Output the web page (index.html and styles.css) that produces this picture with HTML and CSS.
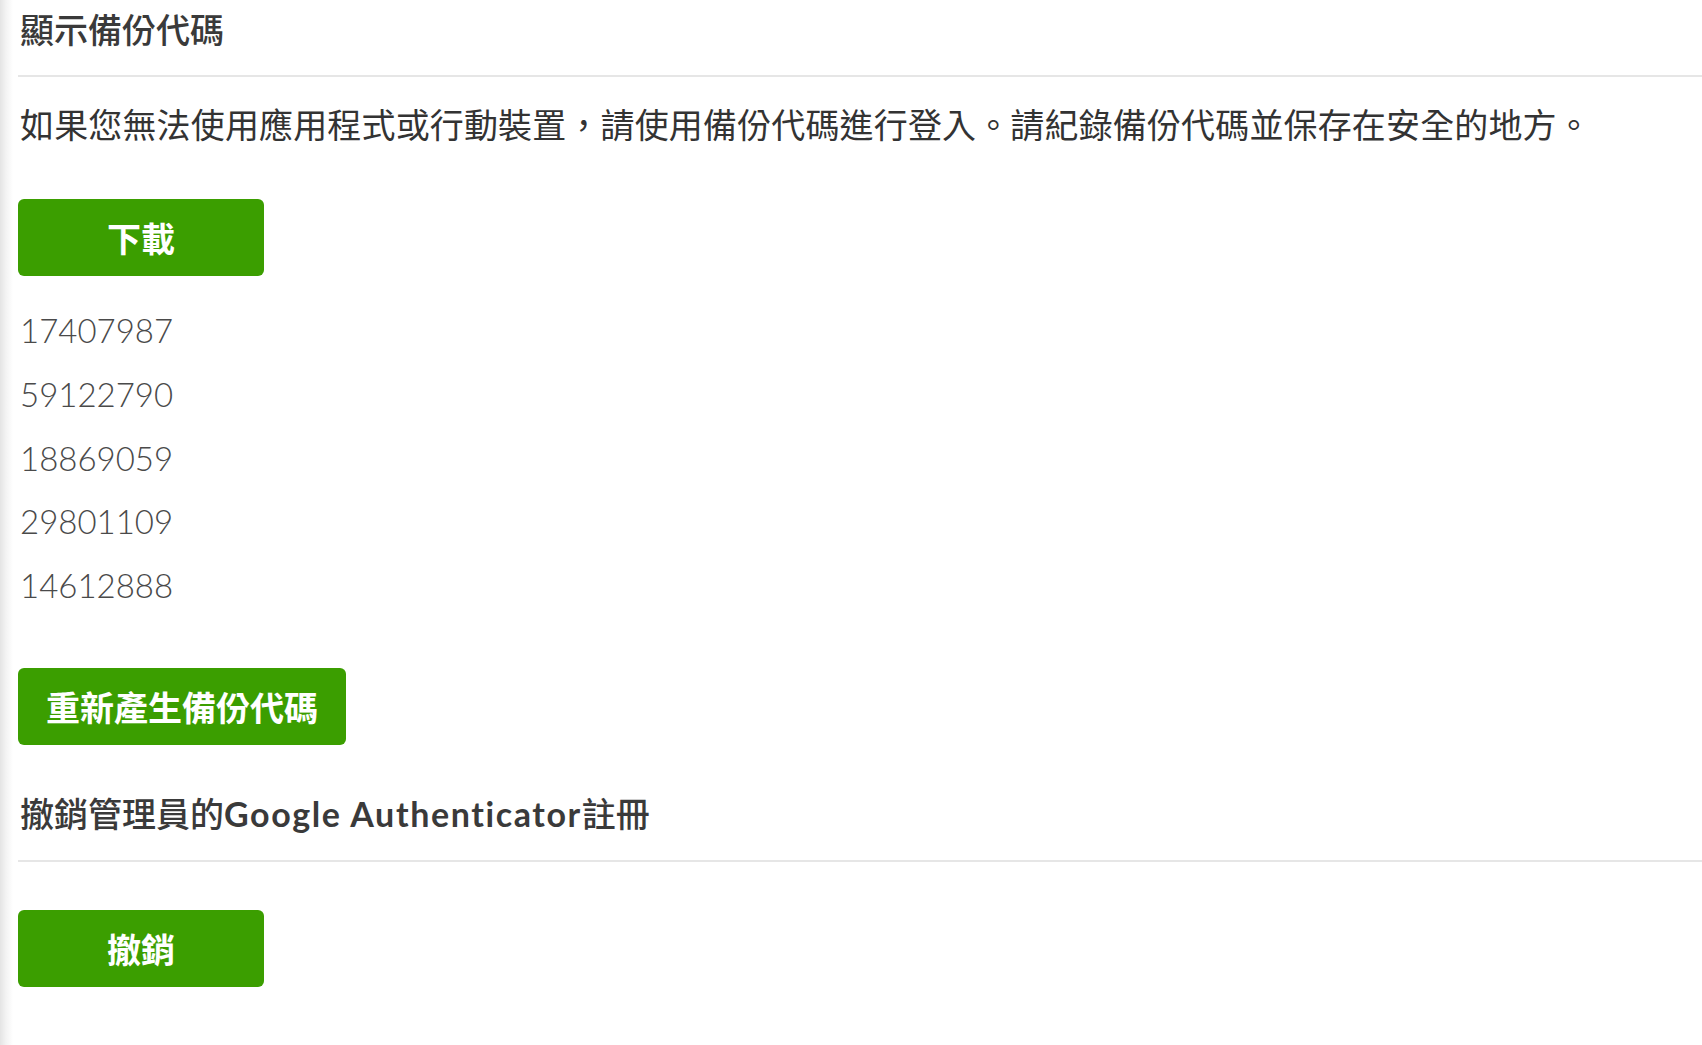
FILE: index.html
```html
<!DOCTYPE html>
<html lang="zh-Hant">
<head>
<meta charset="utf-8">
<title>顯示備份代碼</title>
<link rel="stylesheet" href="styles.css">
</head>
<body>
<main class="page">
  <section class="section">
    <h2 class="section-title">顯示備份代碼</h2>
    <p class="desc">如果您無法使用應用程式或行動裝置，請使用備份代碼進行登入。請紀錄備份代碼並保存在安全的地方。</p>
    <button class="btn btn-fixed btn-download" type="button">下載</button>
    <ul class="codes">
      <li>17407987</li>
      <li>59122790</li>
      <li>18869059</li>
      <li>29801109</li>
      <li>14612888</li>
    </ul>
    <button class="btn btn-regen" type="button">重新產生備份代碼</button>
  </section>
  <section class="section">
    <h2 class="section-title title-2">撤銷管理員的<span class="latin">Google Authenticator</span>註冊</h2>
    <button class="btn btn-fixed btn-revoke" type="button">撤銷</button>
  </section>
</main>
</body>
</html>
```

FILE: styles.css
```css
html, body {
  margin: 0;
  padding: 0;
}

body {
  background: linear-gradient(to right, #e4e4e4 0px, #f3f3f3 6px, #ffffff 13px);
  min-height: 1045px;
  font-family: "Noto Sans CJK TC", "Noto Sans CJK SC", sans-serif;
  color: #333333;
}

.page {
  padding: 5px 0 0 18px;
}

.section {
  display: flex;
  flex-direction: column;
  align-items: flex-start;
}

.section-title {
  align-self: stretch;
  margin: 0;
  padding: 0 0 22px 2px;
  font-size: 34px;
  line-height: 48px;
  font-weight: 500;
  color: #3a3a3a;
  border-bottom: 2px solid #e6e6e6;
}

.title-2 {
  margin-top: 44px;
}

.latin {
  font-family: "Lato", "Noto Sans", sans-serif;
  font-weight: 700;
  letter-spacing: 1.6px;
}

.desc {
  margin: 23px 0 0 0;
  padding-left: 2px;
  font-size: 34px;
  line-height: 48px;
  font-weight: 400;
  letter-spacing: 0.15px;
  color: #333333;
}

.btn {
  display: flex;
  align-items: center;
  justify-content: center;
  height: 77px;
  padding: 0 28px;
  border: none;
  border-radius: 6px;
  background: #3b9e00;
  color: #ffffff;
  font-family: "Noto Sans CJK TC", "Noto Sans CJK SC", sans-serif;
  font-size: 34px;
  font-weight: 700;
  cursor: pointer;
}

.btn-fixed {
  width: 246px;
}

.btn-download {
  margin-top: 51px;
}

.codes {
  list-style: none;
  margin: 23px 0 0 0;
  padding: 0 0 0 2px;
  font-family: "Lato", "Noto Sans", sans-serif;
  font-size: 33px;
  font-weight: 300;
  line-height: 63.75px;
  color: #4a4a4a;
}

.btn-regen {
  margin-top: 50px;
}

.btn-revoke {
  margin-top: 48px;
}
```
